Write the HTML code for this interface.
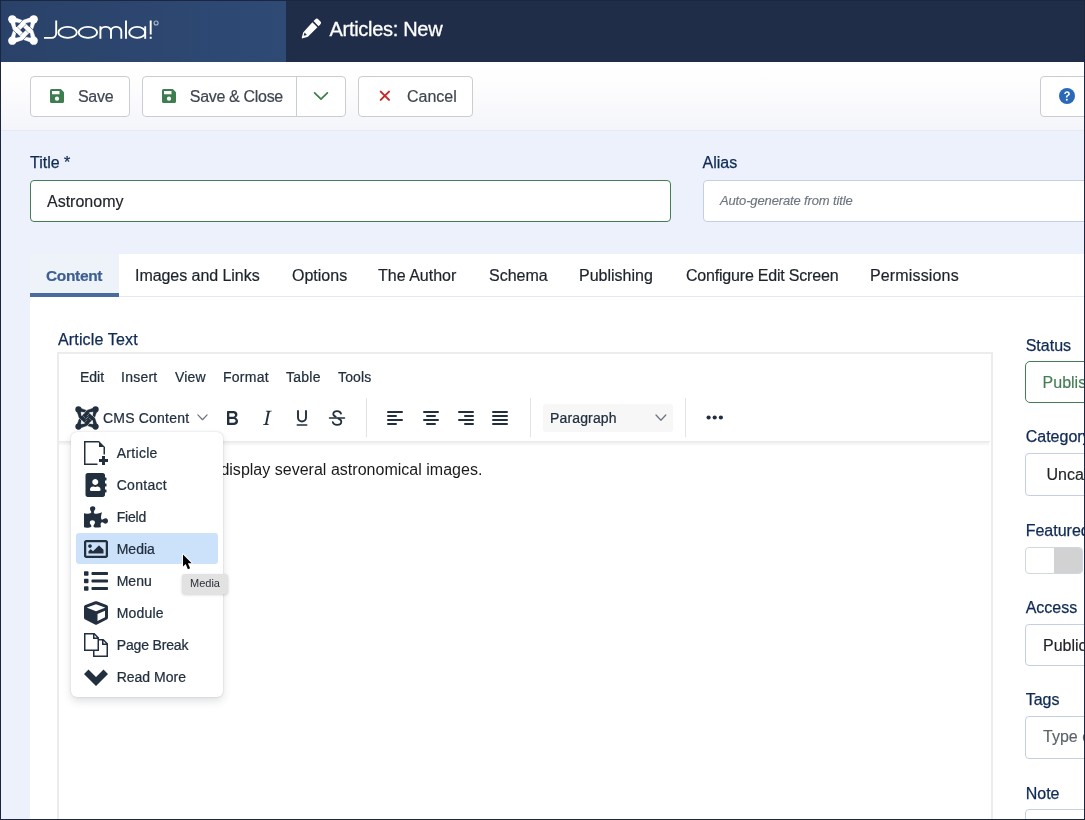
<!DOCTYPE html>
<html lang="en">
<head>
<meta charset="utf-8">
<title>Articles: New</title>
<style>
*{box-sizing:border-box;margin:0;padding:0}
html,body{width:1085px;height:820px;overflow:hidden;background:#edf1fb}
body{font-family:"Liberation Sans",sans-serif;color:#212529;position:relative}
.abs{position:absolute}
#root{will-change:transform;position:absolute;left:0;top:0;width:1085px;height:820px;overflow:hidden;background:#edf1fb}
/* header */
#hdr{left:0;top:0;width:1085px;height:62px;background:#1f2d48}
#logo{left:0;top:0;width:286px;height:62px;background:linear-gradient(90deg,#2a4269,#2e4a75)}
#ptitle{left:329.500px;top:17.300px;font-size:20px;line-height:24px;color:#fff;white-space:nowrap;-webkit-text-stroke:.3px #fff}
/* toolbar */
#tbar{left:0;top:62px;width:1085px;height:68.500px;background:linear-gradient(180deg,#ffffff 0%,#fdfdfe 35%,#f4f5fa 100%);border-bottom:1px solid #e7eaf4}
.btn{position:absolute;top:75.500px;height:41px;background:#fff;border:1px solid #cacdd4;border-radius:4px;font-size:16px;line-height:40.600px;color:#3f4650;white-space:nowrap}
.btn span{position:absolute;top:0;-webkit-text-stroke:.2px currentColor}
/* labels */
.lbl{position:absolute;font-size:16px;line-height:20px;color:#0f2a55;white-space:nowrap;-webkit-text-stroke:.25px #0f2a55}
.inp{position:absolute;background:#fff;border:1px solid #c5cfe4;border-radius:4px;font-size:16px;white-space:nowrap;overflow:hidden}
.inp span{position:absolute;-webkit-text-stroke:.15px currentColor}
/* card */
#card{left:30px;top:254px;width:1060px;height:580px;background:#fff}
.tab{position:absolute;top:264.600px;-webkit-text-stroke:.2px currentColor;font-size:16px;line-height:22px;color:#1d232b;white-space:nowrap}
/* editor */
#ed{left:57px;top:352px;width:936px;height:480px;border:2px solid #ececec;background:#fff}
.mi{-webkit-text-stroke:.22px currentColor;position:absolute;top:368px;font-size:14px;line-height:18px;color:#222f3e;white-space:nowrap}
.tsep{position:absolute;top:398px;width:1px;height:39px;background:#e3e3e3}
.ic{position:absolute}
/* dropdown */
#dd{left:71px;top:432px;width:152px;height:265px;background:#fff;border-radius:6px;box-shadow:0 0 2px rgba(34,47,62,.2),0 4px 8px rgba(34,47,62,.15)}
.ddi{-webkit-text-stroke:.22px currentColor;position:absolute;left:116.700px;font-size:14px;line-height:18px;color:#222f3e;white-space:nowrap}
</style>
</head>
<body>
<div id="root">

<!-- HEADER -->
<div id="hdr" class="abs"></div>
<div id="logo" class="abs"></div>
<svg width="0" height="0" style="position:absolute"><defs>
<symbol id="jsym" viewBox="0 0 30 30">
<mask id="jm" maskUnits="userSpaceOnUse" x="0" y="0" width="30" height="30">
<path fill="#fff" stroke="#fff" stroke-width=".6" stroke-linejoin="round" d="M4.30 2.60L8.30 3.30L14.50 5.50L21.70 3.10L25.70 2.60L27.40 4.30L26.70 8.30L24.50 14.50L26.90 21.70L27.40 25.70L25.70 27.40L21.70 26.70L15.50 24.50L8.30 26.90L4.30 27.40L2.60 25.70L3.30 21.70L5.50 15.50L3.10 8.30L2.60 4.30Z"/>
<g fill="#fff"><circle cx="4.300" cy="4.300" r="4.150"/><circle cx="25.700" cy="4.300" r="4.150"/><circle cx="4.300" cy="25.700" r="4.150"/><circle cx="25.700" cy="25.700" r="4.150"/></g>
<g fill="#000" stroke="#000" stroke-width=".9" stroke-linejoin="round"><path d="M11.90 8.40L8.40 11.90L7.70 7.70Z"/><path d="M21.60 11.90L18.10 8.40L22.30 7.70Z"/><path d="M18.10 21.60L21.60 18.10L22.30 22.30Z"/><path d="M8.40 18.10L11.90 21.60L7.70 22.30Z"/></g>
<rect fill="#000" x="13" y="13" width="4" height="4" rx=".2" transform="rotate(45 15 15)"/>
<path stroke="#000" stroke-width=".6" fill="none" stroke-linecap="round" d="M14.50 5.50L12.00 8.00M24.50 14.50L22.00 12.00M15.50 24.50L18.00 22.00M5.50 15.50L8.00 18.00"/>
<path stroke="#000" stroke-width=".5" fill="none" stroke-linecap="round" opacity=".85" d="M15.10 12.40L18.00 9.60M17.60 15.10L20.40 18.00M14.90 17.60L12.00 20.40M12.40 14.90L9.60 12.00"/>
</mask>
<rect width="30" height="30" fill="currentColor" mask="url(#jm)"/>
</symbol>
<symbol id="jsym2" viewBox="0 0 30 30">
<mask id="jm2" maskUnits="userSpaceOnUse" x="0" y="0" width="30" height="30">
<path fill="#fff" stroke="#fff" stroke-width=".6" stroke-linejoin="round" d="M4.30 2.60L8.30 3.30L14.50 5.50L21.70 3.10L25.70 2.60L27.40 4.30L26.70 8.30L24.50 14.50L26.90 21.70L27.40 25.70L25.70 27.40L21.70 26.70L15.50 24.50L8.30 26.90L4.30 27.40L2.60 25.70L3.30 21.70L5.50 15.50L3.10 8.30L2.60 4.30Z"/>
<g fill="#fff"><circle cx="4.300" cy="4.300" r="3.900"/><circle cx="25.700" cy="4.300" r="3.900"/><circle cx="4.300" cy="25.700" r="3.900"/><circle cx="25.700" cy="25.700" r="3.900"/></g>
<g fill="#000" stroke="#000" stroke-width=".9" stroke-linejoin="round"><path d="M11.90 8.40L8.40 11.90L7.70 7.70Z"/><path d="M21.60 11.90L18.10 8.40L22.30 7.70Z"/><path d="M18.10 21.60L21.60 18.10L22.30 22.30Z"/><path d="M8.40 18.10L11.90 21.60L7.70 22.30Z"/></g>
<path stroke="#000" stroke-width=".55" fill="none" d="M13.200 16.800L16.800 13.200"/>
<path stroke="#000" stroke-width=".6" fill="none" stroke-linecap="round" d="M14.50 5.50L12.00 8.00M24.50 14.50L22.00 12.00M15.50 24.50L18.00 22.00M5.50 15.50L8.00 18.00"/>
<path stroke="#000" stroke-width=".5" fill="none" stroke-linecap="round" opacity=".85" d="M15.10 12.40L18.00 9.60M17.60 15.10L20.40 18.00M14.90 17.60L12.00 20.40M12.40 14.90L9.60 12.00"/>
</mask>
<rect width="30" height="30" fill="currentColor" mask="url(#jm2)"/>
</symbol>
</defs></svg>
<svg class="abs" style="left:8px;top:14.5px;color:#fff" width="30" height="30"><use href="#jsym"/></svg>
<svg class="abs" style="left:40px;top:15px" width="125" height="30" viewBox="40 15 125 30" fill="none" stroke="#fff" stroke-width="1.9">
<path d="M56.2 20.6V33.3a4.6 4.6 0 0 1-4.6 4.6H44"/>
<ellipse cx="67.6" cy="32.4" rx="9.2" ry="5.5"/>
<ellipse cx="87.9" cy="32.4" rx="9.2" ry="5.5"/>
<path d="M100.4 38.8V26.3M100.4 31.5a4.6 4.6 0 0 1 4.6-4.6h1.400a4.600 4.600 0 0 1 4.600 4.600V38.800M111 31.500a4.600 4.600 0 0 1 4.600-4.600h1.100a4.600 4.600 0 0 1 4.600 4.600V38.800"/>
<path d="M126 20.600V38.800"/>
<ellipse cx="137.200" cy="32.400" rx="8" ry="5.500"/>
<path d="M145.200 26.300V38.800"/>
<path d="M150.700 20.600V34.600M150.700 36.800V38.800"/>
<circle cx="156.100" cy="23" r="2" stroke="#aeb9cc" stroke-width="1.100"/>
</svg>
<svg class="abs" style="left:301px;top:18px" width="21" height="21" viewBox="0 0 21 21"><path fill="#fff" d="M14.200 1.400a2.300 2.300 0 0 1 3.250 0l1.800 1.800a2.300 2.300 0 0 1 0 3.250l-1.700 1.700-5.050-5.050zM11.400 4.200l5.050 5.050-9.300 9.300a1.800 1.800 0 0 1-.8.450l-4.700 1.350a.7.700 0 0 1-.87-.87l1.350-4.700a1.800 1.800 0 0 1 .45-.8zM3.600 14.600l-.9 3.200 3.200-.9z" fill-rule="evenodd"/></svg>
<div id="ptitle" class="abs" style="letter-spacing:-.3px">Articles: New</div>

<!-- TOOLBAR -->
<div id="tbar" class="abs"></div>
<div class="btn" style="left:30px;width:100px"><span style="left:47px;letter-spacing:-0.3px">Save</span></div>
<div class="btn" style="left:142px;width:204px"><span style="left:46.800px;letter-spacing:-0.32px">Save &amp; Close</span></div>
<div class="btn" style="left:358px;width:115px"><span style="left:48px">Cancel</span></div>
<div class="btn" style="left:1040px;width:60px"></div>

<!-- TITLE / ALIAS -->
<svg width="0" height="0" style="position:absolute"><defs>
<symbol id="isave" viewBox="0 0 14 14"><path fill-rule="evenodd" d="M1.600 0h8.600a1.600 1.600 0 0 1 1.130.470l2.200 2.200A1.600 1.600 0 0 1 14 3.800v8.600A1.600 1.600 0 0 1 12.400 14H1.600A1.600 1.600 0 0 1 0 12.400V1.600A1.600 1.600 0 0 1 1.600 0zM2 2v3.200h7.500V2zM7 7.600a2.100 2.100 0 1 0 0 4.200 2.100 2.100 0 0 0 0-4.200z"/></symbol>
</defs></svg>
<svg class="abs" style="left:50px;top:89px;color:#3e7d4e" width="14" height="14" fill="currentColor"><use href="#isave"/></svg>
<svg class="abs" style="left:162px;top:89px;color:#3e7d4e" width="14" height="14" fill="currentColor"><use href="#isave"/></svg>
<div class="abs" style="left:296px;top:76px;width:1px;height:40px;background:#c9cdd8"></div>
<svg class="abs" style="left:313px;top:91px" width="16" height="10" viewBox="0 0 16 10" fill="none" stroke="#3e7d4e" stroke-width="1.700" stroke-linecap="round" stroke-linejoin="round"><path d="M1.600 1.800L8 8.200L14.400 1.800"/></svg>
<svg class="abs" style="left:379px;top:90px" width="12" height="12" viewBox="0 0 12 12" fill="none" stroke="#c52827" stroke-width="2" stroke-linecap="round"><path d="M1.700 1.600L10 9.900M10 1.600L1.700 9.900"/></svg>
<svg class="abs" style="left:1059px;top:88px" width="16" height="16" viewBox="0 0 16 16"><circle cx="8" cy="8" r="8" fill="#2a69b8"/><path fill="#fff" d="M5.250 5.900c.050-1.500 1.150-2.550 2.850-2.550 1.600 0 2.750.950 2.750 2.300 0 .950-.480 1.600-1.300 2.100-.800.480-1.020.800-1.020 1.450v.300H6.900v-.450c-.020-.950.420-1.530 1.300-2.060.750-.450 1-.760 1-1.300 0-.600-.470-1.030-1.200-1.030-.750 0-1.230.450-1.280 1.240zM7.800 12.700a.980.980 0 1 1 0-1.960.980.980 0 0 1 0 1.960z"/></svg>
<div class="lbl" style="left:30px;top:153.100px">Title *</div>
<div class="inp" style="left:30px;top:180px;width:641px;height:42px;border-color:#457d54"><span style="left:16px;top:11.800px">Astronomy</span></div>
<div class="lbl" style="left:702.500px;top:153.100px">Alias</div>
<div class="inp" style="left:703px;top:180px;width:400px;height:42px"><span style="left:16px;top:12px;font-size:13px;font-style:italic;color:#6d757e;letter-spacing:-0.14px">Auto-generate from title</span></div>

<!-- CARD + TABS -->
<div id="card" class="abs"></div>
<div class="abs" style="left:30px;top:254px;width:89px;height:40px;background:#eef2f9"></div>
<div class="abs" style="left:30px;top:293px;width:89px;height:4px;background:#4a6b9e"></div>
<div class="abs" style="left:119px;top:296px;width:966px;height:1px;background:#e4e7ef"></div>
<div class="tab" style="left:46px;font-weight:bold;color:#3d5e90;letter-spacing:-0.35px;font-size:15.500px">Content</div>
<div class="tab" style="left:135px;letter-spacing:-0.05px">Images and Links</div>
<div class="tab" style="left:292px">Options</div>
<div class="tab" style="left:378px">The Author</div>
<div class="tab" style="left:489px">Schema</div>
<div class="tab" style="left:579px">Publishing</div>
<div class="tab" style="left:686px;letter-spacing:-0.2px">Configure Edit Screen</div>
<div class="tab" style="left:870px;letter-spacing:0.15px">Permissions</div>
<div class="lbl" style="left:58px;top:330px;letter-spacing:0.15px">Article Text</div>

<!-- EDITOR -->
<div id="ed" class="abs"></div>
<div class="abs" style="left:543px;top:404px;width:130px;height:28px;background:#f7f7f7;border-radius:3px"></div>
<div class="mi" style="left:80px">Edit</div>
<div class="mi" style="left:121px;letter-spacing:0.25px">Insert</div>
<div class="mi" style="left:175px;letter-spacing:0.2px">View</div>
<div class="mi" style="left:223px;letter-spacing:0.25px">Format</div>
<div class="mi" style="left:286px;letter-spacing:0.25px">Table</div>
<div class="mi" style="left:338px;letter-spacing:0.15px">Tools</div>
<div class="abs" style="left:59px;top:440.800px;width:931px;height:1px;background:#ebebeb"></div>
<div class="abs" style="left:59px;top:441.800px;width:930px;height:4px;background:linear-gradient(180deg,rgba(0,0,0,.07),rgba(0,0,0,0))"></div>
<div class="mi" style="left:103px;top:409px;letter-spacing:0.2px">CMS Content</div>
<div class="tsep" style="left:366px"></div>
<svg class="abs" style="left:75px;top:405.500px;color:#222f3e" width="24" height="24"><use href="#jsym2"/></svg>
<svg class="abs" style="left:196.500px;top:414px" width="11" height="7" viewBox="0 0 11 7" fill="none" stroke="#6b7480" stroke-width="1.250" stroke-linecap="round" stroke-linejoin="round"><path d="M0.900 0.900L5.500 5.700L10.100 0.900"/></svg>
<svg class="abs" style="left:220px;top:405.700px" width="24" height="24" viewBox="0 0 24 24"><path fill="#222f3e" fill-rule="evenodd" d="M7.800 19c-.3 0-.5 0-.6-.2l-.2-.5V5.700c0-.2 0-.4.2-.5l.6-.2h5c1.500 0 2.700.3 3.500 1 .7.600 1.100 1.400 1.100 2.500a3 3 0 0 1-.6 1.900c-.4.600-1 1-1.600 1.200.4.100.9.300 1.300.6s.8.700 1 1.200c.4.400.5 1 .5 1.600 0 1.300-.4 2.300-1.300 3-.8.700-2.100 1-3.800 1H7.800Zm5-8.300c.6 0 1.200-.1 1.600-.5.4-.3.6-.7.6-1.300 0-1.100-.8-1.700-2.300-1.700H9.300v3.500h3.400Zm.5 6c.7 0 1.300-.1 1.700-.4.4-.4.6-.9.6-1.500s-.2-1-.7-1.400c-.4-.3-1-.4-2-.4H9.400v3.800h4Z"/></svg>
<svg class="abs" style="left:254.500px;top:405.700px" width="24" height="24" viewBox="0 0 24 24"><path fill="#222f3e" d="m16.700 4.700-.1.900h-.3c-.6 0-1 0-1.400.3-.3.300-.4.600-.5 1.100l-2.100 9.800v.6c0 .5.400.8 1.400.8h.2l-.2.800H8l.2-.8h.2c1.100 0 1.800-.5 2-1.500l2-9.800.1-.5c0-.6-.4-.8-1.400-.8h-.3l.2-.9h5.800Z"/></svg>
<svg class="abs" style="left:289.500px;top:405.700px" width="24" height="24" viewBox="0 0 24 24"><path fill="none" stroke="#222f3e" stroke-width="1.900" stroke-linecap="round" d="M8 5v6.500a4 4 0 0 0 8 0V5"/><path fill="none" stroke="#222f3e" stroke-width="1.600" stroke-linecap="round" d="M7.300 19h9.400"/></svg>
<svg class="abs" style="left:324.800px;top:405.700px" width="24" height="24" viewBox="0 0 24 24"><path fill="none" stroke="#222f3e" stroke-width="1.800" stroke-linecap="round" d="M16 7.600c-.5-1.500-1.900-2.400-3.900-2.400-2.300 0-3.800 1.100-3.800 2.900 0 1.300.8 2.100 2.400 2.600M13.300 12.600c2 .6 3 1.500 3 3.100 0 1.900-1.700 3.100-4.200 3.100-2.300 0-3.900-1-4.300-2.700"/><path fill="none" stroke="#222f3e" stroke-width="1.500" stroke-linecap="round" d="M4.500 12h15"/></svg>
<svg width="0" height="0" style="position:absolute"><defs>
<symbol id="al" viewBox="0 0 24 24"><path d="M5 5h14a1 1 0 0 1 0 2H5a1 1 0 1 1 0-2Zm0 4h8a1 1 0 0 1 0 2H5a1 1 0 1 1 0-2Zm0 4h14a1 1 0 0 1 0 2H5a1 1 0 0 1 0-2Zm0 4h8a1 1 0 0 1 0 2H5a1 1 0 0 1 0-2Z"/></symbol>
<symbol id="ac" viewBox="0 0 24 24"><path d="M5 5h14a1 1 0 0 1 0 2H5a1 1 0 1 1 0-2Zm3 4h8a1 1 0 0 1 0 2H8a1 1 0 1 1 0-2Zm-3 4h14a1 1 0 0 1 0 2H5a1 1 0 0 1 0-2Zm3 4h8a1 1 0 0 1 0 2H8a1 1 0 0 1 0-2Z"/></symbol>
<symbol id="ar" viewBox="0 0 24 24"><path d="M5 5h14a1 1 0 0 1 0 2H5a1 1 0 1 1 0-2Zm6 4h8a1 1 0 0 1 0 2h-8a1 1 0 1 1 0-2Zm-6 4h14a1 1 0 0 1 0 2H5a1 1 0 0 1 0-2Zm6 4h8a1 1 0 0 1 0 2h-8a1 1 0 0 1 0-2Z"/></symbol>
<symbol id="aj" viewBox="0 0 24 24"><path d="M5 5h14a1 1 0 0 1 0 2H5a1 1 0 1 1 0-2Zm0 4h14a1 1 0 0 1 0 2H5a1 1 0 1 1 0-2Zm0 4h14a1 1 0 0 1 0 2H5a1 1 0 0 1 0-2Zm0 4h14a1 1 0 0 1 0 2H5a1 1 0 0 1 0-2Z"/></symbol>
</defs></svg>
<svg class="abs" style="left:383.300px;top:405.700px" width="24" height="24" fill="#222f3e"><use href="#al"/></svg>
<svg class="abs" style="left:418.700px;top:405.700px" width="24" height="24" fill="#222f3e"><use href="#ac"/></svg>
<svg class="abs" style="left:453.700px;top:405.700px" width="24" height="24" fill="#222f3e"><use href="#ar"/></svg>
<svg class="abs" style="left:488.400px;top:405.700px" width="24" height="24" fill="#222f3e"><use href="#aj"/></svg>
<svg class="abs" style="left:655px;top:414.300px" width="12" height="8" viewBox="0 0 12 8" fill="none" stroke="#6b7480" stroke-width="1.250" stroke-linecap="round" stroke-linejoin="round"><path d="M1 1L5.900 6.200L10.800 1"/></svg>
<svg class="abs" style="left:705px;top:414px" width="20" height="8" viewBox="0 0 20 8" fill="#222f3e"><circle cx="3.600" cy="3.500" r="2.100"/><circle cx="9.700" cy="3.500" r="2.100"/><circle cx="15.900" cy="3.500" r="2.100"/></svg>
<div class="tsep" style="left:530px"></div>
<div class="tsep" style="left:685px"></div>
<div class="mi" style="left:550px;top:409px;letter-spacing:0.15px">Paragraph</div>
<div class="abs" style="left:220.400px;top:459.800px;font-size:16px;line-height:20px;color:#1a1a1a;white-space:nowrap;letter-spacing:.015px">display several astronomical images.</div>

<!-- SIDEBAR -->
<div class="lbl" style="left:1025.700px;top:335.6px">Status</div>
<div class="inp" style="left:1025px;top:361px;width:80px;height:42px;border-color:#457d54;border-radius:5px"><span style="left:16.600px;top:11.700px;color:#457d54">Published</span></div>
<div class="lbl" style="left:1025.700px;top:426.6px">Category</div>
<div class="inp" style="left:1025px;top:453px;width:80px;height:43px"><span style="left:20.500px;top:11.700px">Uncategorised</span></div>
<div class="lbl" style="left:1025.700px;top:520.6px">Featured</div>
<div class="abs" style="left:1025px;top:547px;width:58px;height:27px;background:#fff;border:1px solid #cfd6e6;border-radius:4px;overflow:hidden"><div style="position:absolute;left:28px;top:0;width:30px;height:27px;background:#d2d2d2"></div></div>
<div class="lbl" style="left:1025.700px;top:597.6px">Access</div>
<div class="inp" style="left:1025px;top:624px;width:80px;height:42px"><span style="left:17px;top:11.500px">Public</span></div>
<div class="lbl" style="left:1025.700px;top:689.6px">Tags</div>
<div class="inp" style="left:1025px;top:716px;width:80px;height:43px"><span style="left:17px;top:11px;color:#5c636b">Type or select some tags</span></div>
<div class="lbl" style="left:1025.700px;top:783.6px">Note</div>
<div class="inp" style="left:1025px;top:809px;width:80px;height:43px"></div>

<!-- DROPDOWN -->
<div id="dd" class="abs"></div>
<div class="abs" style="left:76px;top:533px;width:142px;height:31px;background:#cce2fa;border-radius:3px"></div>
<div class="ddi" style="top:444px;letter-spacing:0.3px">Article</div>
<svg class="abs" style="left:84px;top:440.500px" width="24" height="24" viewBox="0 0 32 32" fill="#222f3e"><path d="M28 24v-4h-4v4h-4v4h4v4h4v-4h4v-4zM2 2h18v6h6v10h2v-10l-8-8h-20v32h18v-2h-16z"/></svg>
<svg class="abs" style="left:84px;top:472.500px" width="24" height="24" viewBox="0 0 448 512" fill="#222f3e"><path d="M436 160c6.600 0 12-5.400 12-12v-40c0-6.600-5.400-12-12-12h-20V48c0-26.500-21.500-48-48-48H48C21.500 0 0 21.500 0 48v416c0 26.500 21.500 48 48 48h320c26.500 0 48-21.500 48-48v-48h20c6.600 0 12-5.400 12-12v-40c0-6.600-5.400-12-12-12h-20v-64h20c6.600 0 12-5.400 12-12v-40c0-6.600-5.400-12-12-12h-20v-64h20zm-228-32c35.300 0 64 28.700 64 64s-28.700 64-64 64-64-28.700-64-64 28.700-64 64-64zm112 236.800c0 10.600-10 19.200-22.400 19.200H118.400C106 384 96 375.400 96 364.800v-19.200c0-31.800 30.100-57.600 67.200-57.600h5c12.300 5.100 25.700 8 39.800 8s27.600-2.900 39.800-8h5c37.100 0 67.200 25.800 67.200 57.600v19.200z"/></svg>
<svg class="abs" style="left:84px;top:504.500px" width="24" height="24" viewBox="0 0 576 512" fill="#222f3e"><path d="M519.442 288.651c-41.519 0-59.500 31.593-82.058 31.593C377.409 320.244 432 144 432 144s-196.288 80-196.288-3.297c0-35.827 36.288-46.250 36.288-85.985C272 19.216 243.885 0 210.539 0c-34.654 0-66.366 18.891-66.366 56.346 0 41.364 31.711 59.277 31.711 81.750C175.885 207.719 0 166.758 0 166.758v333.237s178.635 41.047 178.635-28.662c0-22.473-40-40.107-40-81.471 0-37.456 29.250-56.346 63.577-56.346 33.673 0 61.788 19.216 61.788 54.717 0 39.735-36.288 50.158-36.288 85.985 0 60.803 129.675 25.730 181.230 25.730 0 0-34.725-120.101 25.827-120.101 35.962 0 46.423 36.152 86.308 36.152C556.712 416 576 387.990 576 354.443c0-34.199-18.962-65.792-56.558-65.792z"/></svg>
<svg class="abs" style="left:84px;top:536.500px" width="24" height="24" viewBox="0 0 512 512" fill="#222f3e"><path d="M464 64H48C21.490 64 0 85.490 0 112v288c0 26.510 21.490 48 48 48h416c26.510 0 48-21.490 48-48V112c0-26.510-21.490-48-48-48zm-6 336H54a6 6 0 0 1-6-6V118a6 6 0 0 1 6-6h404a6 6 0 0 1 6 6v276a6 6 0 0 1-6 6zM128 152c-22.091 0-40 17.909-40 40s17.909 40 40 40 40-17.909 40-40-17.909-40-40-40zM96 352h320v-80l-87.515-87.515c-4.686-4.686-12.284-4.686-16.971 0L192 304l-39.515-39.515c-4.686-4.686-12.284-4.686-16.971 0L96 304v48z"/></svg>
<svg class="abs" style="left:84px;top:568.500px" width="24" height="24" viewBox="0 0 512 512" fill="#222f3e"><path d="M80 368H16a16 16 0 0 0-16 16v64a16 16 0 0 0 16 16h64a16 16 0 0 0 16-16v-64a16 16 0 0 0-16-16zm0-320H16A16 16 0 0 0 0 64v64a16 16 0 0 0 16 16h64a16 16 0 0 0 16-16V64a16 16 0 0 0-16-16zm0 160H16a16 16 0 0 0-16 16v64a16 16 0 0 0 16 16h64a16 16 0 0 0 16-16v-64a16 16 0 0 0-16-16zm416 176H176a16 16 0 0 0-16 16v32a16 16 0 0 0 16 16h320a16 16 0 0 0 16-16v-32a16 16 0 0 0-16-16zm0-320H176a16 16 0 0 0-16 16v32a16 16 0 0 0 16 16h320a16 16 0 0 0 16-16V80a16 16 0 0 0-16-16zm0 160H176a16 16 0 0 0-16 16v32a16 16 0 0 0 16 16h320a16 16 0 0 0 16-16v-32a16 16 0 0 0-16-16z"/></svg>
<svg class="abs" style="left:84px;top:600.500px" width="24" height="24" viewBox="0 0 512 512" fill="#222f3e"><path d="M239.100 6.300l-208 78c-18.700 7-31.100 25-31.100 45v225.100c0 18.200 10.300 34.800 26.500 42.900l208 104c13.500 6.800 29.400 6.800 42.900 0l208-104c16.300-8.100 26.500-24.800 26.500-42.900V129.300c0-20-12.400-37.900-31.100-44.900l-208-78C262 2.200 250 2.200 239.100 6.300zM256 68.400l192 72v1.100l-192 78-192-78v-1.100l192-72zm32 356V275.500l160-65v133.900l-160 80z"/></svg>
<svg class="abs" style="left:84px;top:632.500px" width="24" height="24" viewBox="0 0 32 32" fill="#222f3e"><path d="M26 8h-6v-2l-6-6h-14v24h12v8h20v-18l-6-6zM26 10.828l3.172 3.172h-3.172v-3.172zM14 2.828l3.172 3.172h-3.172v-3.172zM2 2h10v6h6v14h-16v-20zM30 30h-16v-6h6v-14h4v6h6v14z"/></svg>
<svg class="abs" style="left:84px;top:664.500px" width="24" height="24" viewBox="0 0 32 32" fill="#222f3e"><path d="M32 12l-6-6-10 10-10-10-6 6 16 16z"/></svg>
<div class="ddi" style="top:476px;letter-spacing:0.28px">Contact</div>
<div class="ddi" style="top:508px;letter-spacing:-0.2px">Field</div>
<div class="ddi" style="top:540px">Media</div>
<div class="ddi" style="top:572px">Menu</div>
<div class="ddi" style="top:604px;letter-spacing:0.2px">Module</div>
<div class="ddi" style="top:636px;letter-spacing:-0.15px">Page Break</div>
<div class="ddi" style="top:668px">Read More</div>
<div class="abs" style="left:182px;top:574px;width:46px;height:19.500px;background:#e2e2e2;border-radius:3px;box-shadow:0 1px 3px rgba(0,0,0,.18);font-size:11px;line-height:19.500px;color:#2a2f36;text-align:center">Media</div>

<svg class="abs" style="left:179px;top:551px" width="18" height="24" viewBox="179 551 18 24"><path d="M183 554.400V566.600L185.700 564.100L187.900 569.200L190.100 568.200L187.900 563.200H191.700Z" fill="#000" stroke="#fff" stroke-width="1.700" stroke-linejoin="round" paint-order="stroke"/></svg>
<!-- window frame -->
<div class="abs" style="left:0;top:0;width:1085px;height:820px;border:1px solid #1b2740;pointer-events:none"></div>
</div>
</body>
</html>
